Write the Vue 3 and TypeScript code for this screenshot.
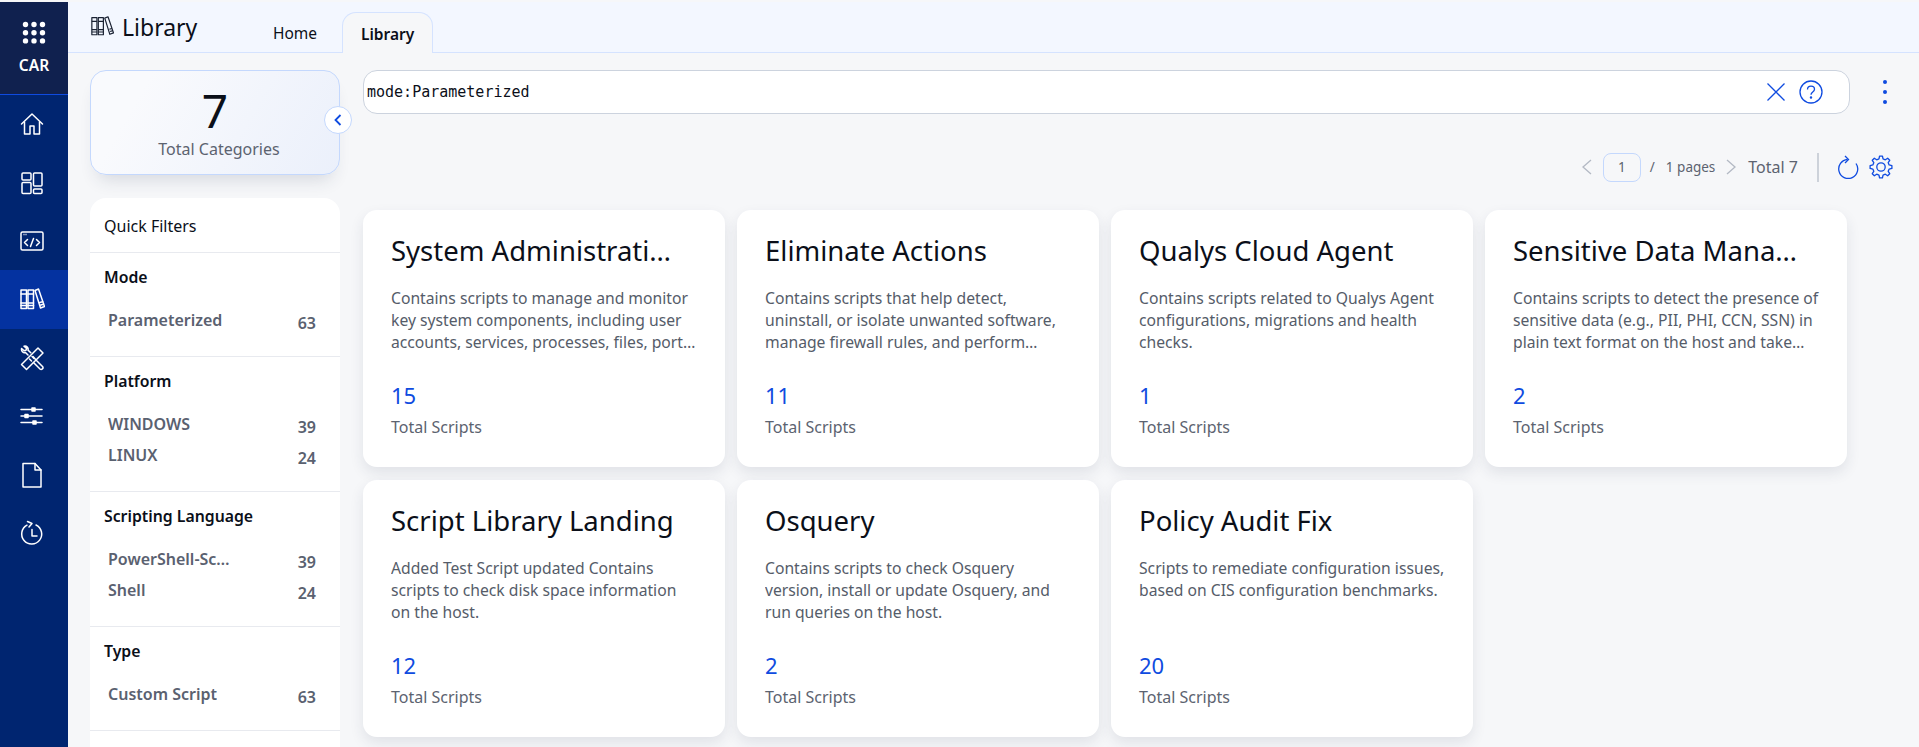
<script setup lang="ts">
interface FilterItem { label: string; count: number }
interface FilterGroup { title: string; items: FilterItem[] }
interface Category { title: string; desc: string; count: number }

const filterGroups: FilterGroup[] = [
  { title: 'Mode', items: [{ label: 'Parameterized', count: 63 }] },
  { title: 'Platform', items: [{ label: 'WINDOWS', count: 39 }, { label: 'LINUX', count: 24 }] },
  { title: 'Scripting Language', items: [{ label: 'PowerShell-Script', count: 39 }, { label: 'Shell', count: 24 }] },
  { title: 'Type', items: [{ label: 'Custom Script', count: 63 }] },
]

const categories: Category[] = [
  { title: 'System Administration', desc: 'Contains scripts to manage and monitor key system components, including user accounts, services, processes, files, ports and more on the host.', count: 15 },
  { title: 'Eliminate Actions', desc: 'Contains scripts that help detect, uninstall, or isolate unwanted software, manage firewall rules, and perform remediation on the host.', count: 11 },
  { title: 'Qualys Cloud Agent', desc: 'Contains scripts related to Qualys Agent configurations, migrations and health checks.', count: 1 },
  { title: 'Sensitive Data Management', desc: 'Contains scripts to detect the presence of sensitive data (e.g., PII, PHI, CCN, SSN) in plain text format on the host and take action on the findings.', count: 2 },
  { title: 'Script Library Landing', desc: 'Added Test Script updated Contains scripts to check disk space information on the host.', count: 12 },
  { title: 'Osquery', desc: 'Contains scripts to check Osquery version, install or update Osquery, and run queries on the host.', count: 2 },
  { title: 'Policy Audit Fix', desc: 'Scripts to remediate configuration issues, based on CIS configuration benchmarks.', count: 20 },
]

const navItems = ['home', 'dash', 'code', 'library', 'tools', 'sliders', 'file', 'clock']

// 8 tooth gear outline around (12,12)
const gearPath = (() => {
  const pts: string[] = []
  const teeth = 8
  for (let i = 0; i < teeth; i++) {
    const a = (i / teeth) * Math.PI * 2
    const step = Math.PI / teeth
    const add = (r: number, t: number) => pts.push(`${(12 + r * Math.cos(t)).toFixed(2)} ${(12 + r * Math.sin(t)).toFixed(2)}`)
    add(8.4, a - step * 0.62)
    add(11, a - step * 0.34)
    add(11, a + step * 0.34)
    add(8.4, a + step * 0.62)
  }
  return 'M' + pts.join('L') + 'Z'
})()
</script>

<template>
  <div class="app">
    <aside class="sidebar">
      <div class="brand">
        <svg width="26" height="26" viewBox="0 0 26 26" fill="#fff">
          <circle v-for="c in 9" :key="c" :cx="4.5 + ((c - 1) % 3) * 8.5" :cy="4.5 + Math.floor((c - 1) / 3) * 8.2" r="2.7" />
        </svg>
        <span class="brand-name">CAR</span>
      </div>
      <nav class="nav">
        <div v-for="item in navItems" :key="item" class="nav-item" :class="{ active: item === 'library' }">
          <svg width="26" height="26" viewBox="0 0 26 26" fill="none" stroke="#fff" stroke-width="1.5" stroke-linejoin="round" stroke-linecap="round">
            <template v-if="item === 'home'">
              <path d="M2.500 13 13 3l10.500 10" />
              <path d="M5.500 11v12h5.500v-8h4v8h5.500V11" />
            </template>
            <template v-else-if="item === 'dash'">
              <rect x="3" y="3" width="9" height="7" rx="1" />
              <rect x="3" y="12.500" width="9" height="11" rx="1" />
              <rect x="14.500" y="3" width="8.500" height="13" rx="1" />
              <rect x="14.500" y="19" width="8.500" height="4.500" rx="1" />
            </template>
            <template v-else-if="item === 'code'">
              <rect x="2" y="4" width="22" height="18" rx="1.500" />
              <path d="M4.500 6.500h4" stroke-dasharray="1 1" stroke-linecap="butt" />
              <path d="m8.500 11.500-3 3 3 3M17.500 11.500l3 3-3 3M14.500 10.500l-3 8" />
            </template>
            <template v-else-if="item === 'library'">
              <rect x="2" y="4" width="5.500" height="18.500" />
              <rect x="9" y="4" width="5.500" height="18.500" />
              <path d="M2 8h5.500M2 17h5.500M2 19.500h5.500M9 8h5.500M9 17h5.500M9 19.500h5.500" />
              <path d="m16 4.500 3.500-1.500 6 17.500-4 1.500zM21 16.500l3-1M21.800 19l3-1" />
            </template>
            <template v-else-if="item === 'tools'">
              <path d="m14 11.500 3.500 4 6 6c1.500 1.800-1 3.800-2.500 2.500l-6.500-6.500M9 10 6.500 7.500C4.200 8.200 2 6 2.600 3.500l2.600 2.300 1.800-.6.6-1.800L5 1.200c2.600-.6 4.800 1.600 4 3.900l2.800 2.700" />
              <path d="m2.500 19.500 16.500-16.500 5 5-16.500 16.500z" />
              <path d="m10.500 14 2 2M13 11.500l2 2" />
            </template>
            <template v-else-if="item === 'sliders'">
              <path d="M2 6.500h21M2 13h21M2 19.500h21" />
              <rect x="13" y="5" width="3" height="3" fill="#fff" />
              <rect x="6" y="11.500" width="3" height="3" fill="#fff" />
              <rect x="14" y="18" width="3" height="3" fill="#fff" />
            </template>
            <template v-else-if="item === 'file'">
              <path d="M4 1.500h12l6 6.500v17H4z" />
              <path d="M16 1.500V8h6" />
            </template>
            <template v-else>
              <path d="M17 5a10 10 0 1 1-9 .2" />
              <path d="M8.500 1.500 13 3.500l-3 3.500" />
              <path d="M13 9.500V16h5" />
            </template>
          </svg>
        </div>
      </nav>
    </aside>

    <div class="main">
      <header class="topbar">
        <div class="page-title">
          <svg width="24" height="24" viewBox="0 0 26 26" fill="none" stroke="#1a2233" stroke-width="1.300" stroke-linejoin="round">
            <rect x="2" y="4" width="5.500" height="18.500" />
            <rect x="9" y="4" width="5.500" height="18.500" />
            <path d="M2 8h5.500M2 17h5.500M2 19.500h5.500M9 8h5.500M9 17h5.500M9 19.500h5.500" />
            <path d="m16 4.500 3.500-1.500 6 17.500-4 1.500zM21 16.500l3-1M21.800 19l3-1" />
          </svg>
          <span>Library</span>
        </div>
        <div class="tabs">
          <div class="tab">Home</div>
          <div class="tab selected">Library</div>
        </div>
      </header>

      <div class="content">
        <div class="left">
          <div class="stat-card">
            <div class="stat-num">7</div>
            <div class="stat-label">Total Categories</div>
            <button class="collapse">
              <svg width="12" height="14" viewBox="0 0 12 14" fill="none" stroke="#0f4be0" stroke-width="1.800"><path d="M8.500 2 3.500 7l5 5" /></svg>
            </button>
          </div>
          <div class="filters">
            <div class="filter-head">Quick Filters</div>
            <section v-for="g in filterGroups" :key="g.title" class="filter-group">
              <h4>{{ g.title }}</h4>
              <div v-for="i in g.items" :key="i.label" class="filter-row">
                <span class="filter-label">{{ i.label }}</span>
                <span class="filter-count">{{ i.count }}</span>
              </div>
            </section>
          </div>
        </div>

        <div class="right">
          <div class="search-row">
            <div class="search">
              <span class="query">mode:Parameterized</span>
              <svg width="20" height="20" viewBox="0 0 20 20" fill="none" stroke="#0f4be0" stroke-width="1.300"><path d="m1.500 1.500 17 17M18.500 1.500l-17 17" /></svg>
              <svg class="help" width="24" height="24" viewBox="0 0 24 24" fill="none" stroke="#0f4be0" stroke-width="1.300">
                <circle cx="12" cy="12" r="11" />
                <path d="M8.500 9.500c0-2 1.500-3.300 3.500-3.300s3.500 1.300 3.500 3.100c0 2.700-3.500 2.700-3.500 5.400" />
                <circle cx="12" cy="17.500" r=".6" fill="#0f4be0" />
              </svg>
            </div>
            <div class="kebab"><i /><i /><i /></div>
          </div>

          <div class="pager">
            <svg width="11" height="16" viewBox="0 0 11 16" fill="none" stroke="#b3b9c4" stroke-width="1.300"><path d="M10 1 2 8l8 7" /></svg>
            <span class="page-box">1</span>
            <span class="slash">/</span>
            <span class="pages">1 pages</span>
            <svg width="11" height="16" viewBox="0 0 11 16" fill="none" stroke="#b3b9c4" stroke-width="1.300"><path d="m1 1 8 7-8 7" /></svg>
            <span class="total">Total 7</span>
            <span class="vline" />
            <svg class="refresh" width="22" height="24" viewBox="0 0 22 24" fill="none" stroke="#0f4be0" stroke-width="1.300"><path d="M10.500 4.500a9.500 9.500 0 1 0 8.500 4" /><path d="M8 1l3.500 3.500L8 8" /></svg>
            <svg width="24" height="24" viewBox="0 0 24 24" fill="none" stroke="#0f4be0" stroke-width="1.300" stroke-linejoin="round">
              <path :d="gearPath" />
              <circle cx="12" cy="12" r="4.200" />
            </svg>
          </div>

          <div class="grid">
            <article v-for="c in categories" :key="c.title" class="card">
              <h3>{{ c.title }}</h3>
              <p>{{ c.desc }}</p>
              <div class="card-num">{{ c.count }}</div>
              <div class="card-sub">Total Scripts</div>
            </article>
          </div>
        </div>
      </div>
    </div>
  </div>
</template>

<style>
html, body { margin: 0; background: #f6f7f9; overflow: hidden; }
</style>

<style scoped>
* { box-sizing: border-box; }
.app {
  display: flex;
  height: 747px;
  overflow: hidden;
  padding-top: 2px;
  font-family: "Noto Sans", sans-serif;
  color: #0b0f19;
}
.sidebar {
  width: 68px;
  flex: none;
  background: #002570;
}
.brand {
  height: 93px;
  background: #10214f;
  border-bottom: 1px solid #0f4be0;
  display: flex;
  flex-direction: column;
  align-items: center;
  padding-top: 18px;
  gap: 9px;
}
.brand-name { color: #fff; font-size: 15.500px; font-weight: 600; line-height: 20px; }
.nav-item {
  height: 58.400px;
  display: flex;
  align-items: center;
  justify-content: center;
  padding-right: 4px;
}
.nav-item.active { background: #0432a0; }

.main { flex: 1; min-width: 0; display: flex; flex-direction: column; }
.topbar {
  height: 51px;
  flex: none;
  display: flex;
  background: #f3f7ff;
  border-bottom: 1px solid #d5e3ff;
  padding-left: 22px;
}
.page-title {
  display: flex;
  align-items: flex-start;
  gap: 8px;
  font-size: 23px;
  line-height: 30px;
  width: 183px;
  padding-top: 10px;
}
.page-title svg { margin-top: 2px; }
.tabs { display: flex; align-items: flex-end; gap: 25px; }
.tab { font-size: 15.500px; line-height: 20px; padding-bottom: 9px; }
.tab.selected {
  width: 91px;
  height: 41px;
  margin-bottom: -1px;
  padding: 11px 0 0;
  text-align: center;
  font-weight: 600;
  background: #f6f7f9;
  border: 1px solid #d5e3ff;
  border-bottom: none;
  border-radius: 14px 14px 0 0;
}

.content { flex: 1; min-height: 0; display: flex; padding: 17px 0 0 22px; gap: 23px; }
.left { width: 250px; flex: none; }
.stat-card {
  position: relative;
  height: 105px;
  background: linear-gradient(120deg, #f9fafd 20%, #ebf0fb 100%);
  border: 1px solid #c4d8fd;
  border-radius: 16px;
  box-shadow: 0 12px 18px -8px rgba(40, 50, 80, .16);
  text-align: center;
  padding-top: 16px;
}
.stat-num { font-size: 46px; line-height: 46px; }
.stat-label { font-size: 16px; line-height: 20px; color: #5c6370; margin-top: 6px; padding-left: 8px; }
.collapse {
  position: absolute;
  right: -13px;
  top: 35px;
  width: 28px;
  height: 28px;
  border-radius: 50%;
  border: 1px solid #c4d8fd;
  background: #fff;
  padding: 0;
  display: flex;
  align-items: center;
  justify-content: center;
}
.filters {
  margin-top: 23px;
  background: #fff;
  border-radius: 16px 16px 0 0;
  height: 560px;
}
.filter-head {
  height: 55px;
  padding: 18px 14px 0;
  font-size: 16px;
  line-height: 20px;
  border-bottom: 1px solid #e8eaef;
}
.filter-group {
  padding: 14px 14px 15px;
  border-bottom: 1px solid #e8eaef;
}
.filter-group h4 {
  margin: 0 0 23px;
  font-size: 15.800px;
  line-height: 20px;
  font-weight: 600;
}
.filter-row {
  display: flex;
  justify-content: space-between;
  height: 31px;
  padding: 0 10px 0 4px;
  font-size: 16px;
  line-height: 20px;
  color: #5a6170;
  font-weight: 600;
}
.filter-label {
  max-width: 124px;
  overflow: hidden;
  white-space: nowrap;
  text-overflow: ellipsis;
}
.filter-count { padding-top: 3px; }

.right { width: 1530px; flex: none; }
.search-row { display: flex; align-items: center; }
.search {
  width: 1487px;
  height: 44px;
  display: flex;
  align-items: center;
  background: #fff;
  border: 1px solid #ccd3de;
  border-radius: 14px;
  padding: 0 26px 0 3px;
}
.query {
  flex: 1;
  font-family: "DejaVu Sans Mono", monospace;
  font-size: 15px;
}
.help { margin-left: 13px; }
.kebab {
  margin-left: 33px;
  display: flex;
  flex-direction: column;
  gap: 6px;
}
.kebab i { width: 4px; height: 4px; border-radius: 50%; background: #0f4be0; }

.pager {
  display: flex;
  align-items: center;
  height: 30px;
  margin-top: 38px;
  padding-right: 0;
  justify-content: flex-end;
  font-size: 13.500px;
  color: #5c6370;
}
.page-box {
  width: 38px;
  height: 29px;
  margin-left: 11px;
  border: 1px solid #c4d8fd;
  border-radius: 8px;
  text-align: center;
  line-height: 27px;
}
.slash { margin-left: 9px; }
.pages { margin: 0 11px 0 11px; }
.total { font-size: 16px; margin-left: 11px; }
.vline { width: 2px; height: 29px; background: #cdd2da; margin: 0 18px 0 19px; }
.refresh { margin-right: 10px; }

.grid {
  display: grid;
  grid-template-columns: repeat(4, 361.500px);
  column-gap: 12.500px;
  row-gap: 13px;
  margin-top: 28px;
}
.card {
  height: 257px;
  background: #fff;
  border-radius: 14px;
  padding: 23px 25px 0 28px;
  box-shadow: 0 6px 14px rgba(40, 50, 80, .10);
}
.card h3 {
  margin: 0;
  max-width: 290px;
  font-size: 27.500px;
  line-height: 36px;
  font-weight: 400;
  overflow: hidden;
  white-space: nowrap;
  text-overflow: ellipsis;
}
.card p {
  margin: 18px 0 0;
  height: 66px;
  font-size: 15.700px;
  line-height: 22px;
  color: #555c69;
  display: -webkit-box;
  -webkit-box-orient: vertical;
  -webkit-line-clamp: 3;
  overflow: hidden;
}
.card-num { margin-top: 27px; font-size: 22px; line-height: 30px; color: #0f4be0; }
.card-sub { margin-top: 7px; font-size: 16px; line-height: 20px; color: #5c6370; }
</style>
